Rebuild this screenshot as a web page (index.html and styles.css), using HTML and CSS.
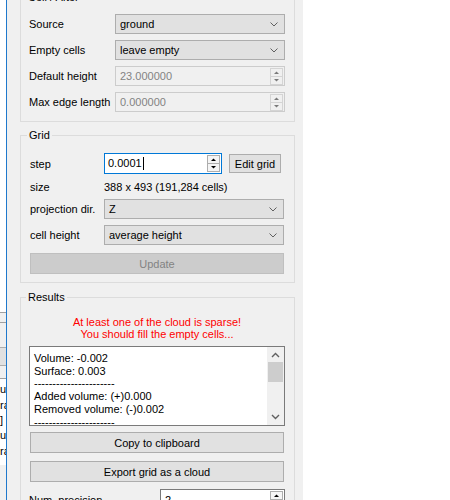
FILE: index.html
```html
<!DOCTYPE html>
<html>
<head>
<meta charset="utf-8">
<link rel="stylesheet" href="styles.css">
</head>
<body>
<div class="screen">
  <div class="behind">
    <div class="bw bw-top"></div>
    <div class="bw-line"></div>
    <div class="bw-gray bw-g1"></div>
    <div class="bw-line"></div>
    <div class="bw-gray bw-g2"></div>
    <div class="bw-btn"></div>
    <div class="bw-gray bw-g3"></div>
    <div class="bw-list">
      <span class="frag f1">ur</span>
      <span class="frag f2">ra</span>
      <span class="frag f3">]</span>
      <span class="frag f4">ur</span>
      <span class="frag f5">ra</span>
    </div>
    <div class="bw-gray bw-g4"></div>
  </div>

  <div class="dialog">
    <fieldset class="group g-ceil">
      <legend>Ceil / After</legend>
      <div class="form form-ceil">
        <span class="lbl">Source</span>
        <div class="combo"><span>ground</span><svg class="chev" width="8" height="5" viewBox="0 0 8 5"><polyline points="0.5,0.5 4,4 7.5,0.5" fill="none" stroke="#606060" stroke-width="1"/></svg></div>
        <span class="lbl">Empty cells</span>
        <div class="combo"><span>leave empty</span><svg class="chev" width="8" height="5" viewBox="0 0 8 5"><polyline points="0.5,0.5 4,4 7.5,0.5" fill="none" stroke="#606060" stroke-width="1"/></svg></div>
        <span class="lbl">Default height</span>
        <div class="spin disabled"><span>23.000000</span>
          <svg class="spinbtn" width="13" height="17" viewBox="0 0 13 17"><rect x="0.5" y="0.5" width="12" height="16" fill="#f0f0f0" stroke="#d4d4d4"/><line x1="0.5" y1="8.5" x2="12.5" y2="8.5" stroke="#d4d4d4"/><polygon points="4,6 9,6 6.5,3.5" fill="#7a7a7a"/><polygon points="4,11 9,11 6.5,13.5" fill="#7a7a7a"/></svg>
        </div>
        <span class="lbl">Max edge length</span>
        <div class="spin disabled"><span>0.000000</span>
          <svg class="spinbtn" width="13" height="17" viewBox="0 0 13 17"><rect x="0.5" y="0.5" width="12" height="16" fill="#f0f0f0" stroke="#d4d4d4"/><line x1="0.5" y1="8.5" x2="12.5" y2="8.5" stroke="#d4d4d4"/><polygon points="4,6 9,6 6.5,3.5" fill="#7a7a7a"/><polygon points="4,11 9,11 6.5,13.5" fill="#7a7a7a"/></svg>
        </div>
      </div>
    </fieldset>

    <fieldset class="group g-grid">
      <legend>Grid</legend>
      <div class="form form-grid">
        <span class="lbl">step</span>
        <div class="steprow">
          <div class="spin active"><span>0.0001<i class="caret"></i></span>
            <svg class="spinbtn" width="13" height="17" viewBox="0 0 13 17"><rect x="0.5" y="0.5" width="12" height="16" fill="#f5f5f5" stroke="#adadad"/><line x1="0.5" y1="8.5" x2="12.5" y2="8.5" stroke="#adadad"/><polygon points="4,6 9,6 6.5,3.5" fill="#000"/><polygon points="4,11 9,11 6.5,13.5" fill="#000"/></svg>
          </div>
          <div class="btn btn-edit">Edit grid</div>
        </div>
        <span class="lbl">size</span>
        <span class="val">388 x 493 (191,284 cells)</span>
        <span class="lbl">projection dir.</span>
        <div class="combo"><span>Z</span><svg class="chev" width="8" height="5" viewBox="0 0 8 5"><polyline points="0.5,0.5 4,4 7.5,0.5" fill="none" stroke="#606060" stroke-width="1"/></svg></div>
        <span class="lbl lbl-cell">cell height</span>
        <div class="combo combo-cell"><span>average height</span><svg class="chev" width="8" height="5" viewBox="0 0 8 5"><polyline points="0.5,0.5 4,4 7.5,0.5" fill="none" stroke="#606060" stroke-width="1"/></svg></div>
      </div>
      <div class="btn btn-update">Update</div>
    </fieldset>

    <fieldset class="group g-results">
      <legend>Results</legend>
      <div class="warn">At least one of the cloud is sparse!<br>You should fill the empty cells...</div>
      <div class="report">
        <div class="report-text">Volume: -0.002<br>Surface: 0.003<br>----------------------<br>Added volume: (+)0.000<br>Removed volume: (-)0.002<br>----------------------</div>
        <div class="vscroll">
          <svg class="sc-arrow" width="9" height="6" viewBox="0 0 9 6"><polyline points="1,5 4.5,1.5 8,5" fill="none" stroke="#606060" stroke-width="1.4"/></svg>
          <div class="sc-thumb"></div>
          <div class="sc-space"></div>
          <svg class="sc-arrow" width="9" height="6" viewBox="0 0 9 6"><polyline points="1,1 4.5,4.5 8,1" fill="none" stroke="#606060" stroke-width="1.4"/></svg>
        </div>
      </div>
      <div class="btn btn-wide btn-copy">Copy to clipboard</div>
      <div class="btn btn-wide btn-export">Export grid as a cloud</div>
      <div class="precrow">
        <span class="lbl">Num. precision</span>
        <div class="spin prec"><span>2</span>
          <svg class="spinbtn" width="13" height="17" viewBox="0 0 13 17"><rect x="0.5" y="0.5" width="12" height="16" fill="#f5f5f5" stroke="#adadad"/><line x1="0.5" y1="8.5" x2="12.5" y2="8.5" stroke="#adadad"/><polygon points="4,6 9,6 6.5,3.5" fill="#000"/><polygon points="4,11 9,11 6.5,13.5" fill="#000"/></svg>
        </div>
      </div>
    </fieldset>
  </div>

  <div class="desk"></div>
</div>
</body>
</html>
```

FILE: styles.css
```css
html, body {
  margin: 0;
  padding: 0;
  height: 500px;
  overflow: hidden;
  background: #ffffff;
}
body {
  font-family: "Liberation Sans", Arial, sans-serif;
  font-size: 11px;
  color: #000;
}
.screen {
  display: flex;
  height: 500px;
  overflow: hidden;
}

/* window behind the dialog */
.behind {
  width: 6px;
  flex: none;
  display: flex;
  flex-direction: column;
  overflow: hidden;
}
.bw { background: #fff; }
.bw-top { height: 312px; flex: none; }
.bw-line { height: 1px; background: #a0a0a0; flex: none; }
.bw-gray { background: #f0f0f0; flex: none; }
.bw-g1 { height: 9px; }
.bw-g2 { height: 24px; }
.bw-btn { height: 17px; flex: none; background: #e1e1e1; border-top: 1px solid #adadad; border-bottom: 1px solid #adadad; }
.bw-g3 { height: 12px; border-bottom: 1px solid #a0a0a0; }
.bw-list {
  height: 86px;
  flex: none;
  background: #fff;
  display: flex;
  flex-direction: column;
  overflow: hidden;
  padding-top: 4px;
  box-sizing: border-box;
}
.frag { white-space: nowrap; line-height: 13px; height: 15px; flex: none; font-size: 11px; }
.f1, .f4 { height: 16px; }
.bw-g4 { flex: 1; }

/* dialog */
.dialog {
  width: 297px;
  flex: none;
  background: #f0f0f0;
  border-left: 1px solid #1f78cc;
  padding: 0 8px 0 13px;
  box-sizing: border-box;
  overflow: hidden;
}
.desk { flex: 1; background: #fff; }

.group {
  margin: 0;
  border: 1px solid #dcdcdc;
  min-width: 0;
  box-sizing: border-box;
}
.group legend {
  padding: 0 2px;
  margin-left: -3px;
  line-height: 13px;
  font-size: 11px;
}
.g-ceil {
  margin-top: -9px;
  padding: 10px 9px 9px 8px;
}
.g-grid {
  margin-top: 7px;
  padding: 11px 10px 8px 9px;
}
.g-results {
  margin-top: 8px;
  padding: 12px 9px 0 8px;
  height: 260px;
}

.form {
  display: grid;
  align-items: center;
}
.form-ceil {
  grid-template-columns: 86px 1fr;
  grid-auto-rows: 20px;
  row-gap: 6px;
}
.form-grid {
  grid-template-columns: 74px 1fr;
  grid-template-rows: 21px 25px 20px 26px;
}
.lbl-cell, .combo-cell { margin-top: 6px; }
.lbl { white-space: nowrap; }
.val { white-space: nowrap; }

.combo {
  height: 20px;
  box-sizing: border-box;
  border: 1px solid #adadad;
  background: #e1e1e1;
  display: flex;
  align-items: center;
  justify-content: space-between;
  padding: 0 6px 0 4px;
}
.chev { flex: none; margin-top: 1px; }

.spin {
  height: 20px;
  box-sizing: border-box;
  display: flex;
  align-items: center;
  justify-content: space-between;
  padding: 0 1px 0 4px;
}
.spin.disabled {
  border: 1px solid #cccccc;
  background: #f0f0f0;
  color: #838383;
}
.spin.active {
  width: 118px;
  height: 21px;
  border: 1px solid #0078d7;
  background: #fff;
  padding-left: 3px;
}
.spinbtn { flex: none; display: block; }
.caret {
  display: inline-block;
  width: 1px;
  height: 13px;
  background: #000;
  vertical-align: -3px;
  margin-left: 1px;
}

.steprow {
  display: flex;
  align-items: center;
  gap: 7px;
}
.btn {
  box-sizing: border-box;
  border: 1px solid #adadad;
  background: #e1e1e1;
  display: flex;
  align-items: center;
  justify-content: center;
  white-space: nowrap;
}
.btn-edit {
  width: 52px;
  height: 19px;
}
.btn-update {
  margin-top: 8px;
  height: 21px;
  background: #cccccc;
  border-color: #bfbfbf;
  color: #838383;
}

.warn {
  color: #ff0000;
  text-align: center;
  line-height: 12px;
}
.report {
  margin-top: 6px;
  height: 80px;
  box-sizing: border-box;
  border: 1px solid #7a7a7a;
  background: #fff;
  display: flex;
  overflow: hidden;
}
.report-text {
  flex: 1;
  padding: 5px 0 0 4px;
  line-height: 12.7px;
  white-space: nowrap;
  overflow: hidden;
}
.vscroll {
  width: 17px;
  flex: none;
  background: #f0f0f0;
  display: flex;
  flex-direction: column;
  align-items: center;
}
.sc-arrow { flex: none; margin: 5px 0 4px; }
.sc-thumb { width: 15px; height: 20px; background: #cdcdcd; flex: none; }
.sc-space { flex: 1; }
.vscroll .sc-arrow:last-child { margin: 4px 0 5px; }

.btn-wide {
  height: 21px;
  margin: 7px 1px 0;
}
.btn-copy { margin-top: 6px; }
.btn-export { margin-top: 8px; }

.precrow {
  margin-top: 7px;
  display: flex;
  align-items: center;
  justify-content: space-between;
}
.spin.prec {
  width: 125px;
  height: 21px;
  border: 1px solid #7a7a7a;
  background: #fff;
}
```
